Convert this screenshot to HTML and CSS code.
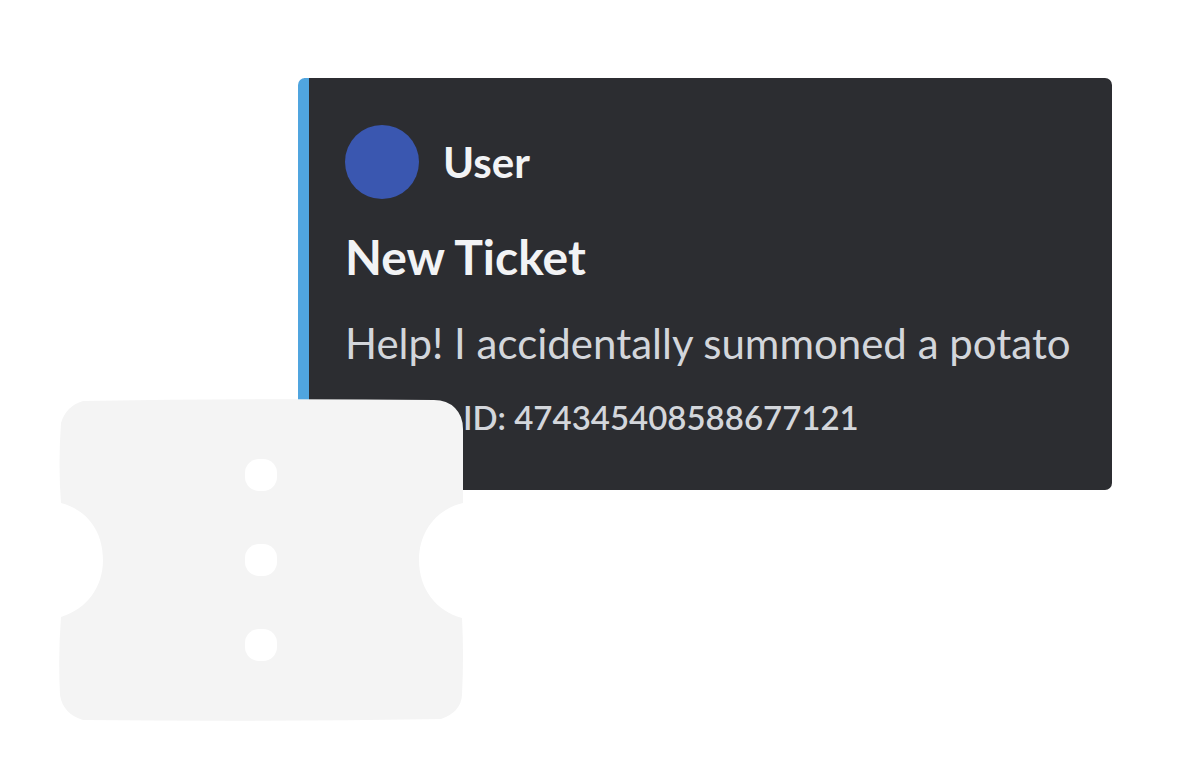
FILE: index.html
```html
<!DOCTYPE html>
<html lang="en">
<head>
    <meta charset="UTF-8">
    <meta name="viewport" content="width=device-width, initial-scale=1.0">
    <title>New Ticket</title>
    <link rel="stylesheet" href="styles.css">
</head>
<body>

<main class="scene">
    <article class="embed">
        <header class="author">
            <span class="avatar"></span>
            <span class="name">User</span>
        </header>
        <h1 class="title">New Ticket</h1>
        <p class="message">Help! I accidentally summoned a potato</p>
        <footer class="footer">ID: 474345408588677121</footer>
    </article>

    <svg class="ticket" viewBox="0 0 404 322" aria-hidden="true">
        <path fill="#f4f4f4" d="M24 2Q202 -1 375 1Q388 1 396 9Q404 17 404 30Q405 66 404 104C378 110 360 132 360 161C360 190 377 212 403 219Q405 256 403 296Q402 313 382 320Q202 323 24 321Q4 315 1 296Q-1 256 2 218C28 210 44 188 44 161C44 132 28 111 2 104Q-1 66 2 24Q7 7 24 2Z"/>
        <g fill="#fff">
            <rect x="186" y="60" width="32" height="32" rx="14"/>
            <rect x="186" y="145" width="32" height="32" rx="14"/>
            <rect x="186" y="230" width="32" height="32" rx="14"/>
        </g>
    </svg>
</main>

</body>
</html>
```

FILE: styles.css
```css
body {
    margin: 0;
    background-color: #fff;
    font-family: Lato, "Noto Sans", sans-serif;
}

.scene {
    padding: 78px 88px 59px 59px;
}

.embed {
    margin-left: 239px;
    padding: 47px 36px 51px;
    border-left: 11px solid #50a5df;
    border-radius: 7px;
    background-color: #2c2d31;
    color: #d3d6db;
    white-space: nowrap;
}

.author {
    display: flex;
    align-items: center;
    gap: 24px;
}

.avatar {
    width: 74px;
    height: 74px;
    border-radius: 50%;
    background-color: #3a57b0;
}

.name {
    color: #f2f3f5;
    font-size: 42px;
    font-weight: bold;
}

.title {
    margin: 30px 0 0;
    color: #f2f3f5;
    font-size: 48px;
    line-height: 56px;
}

.message {
    margin: 32px 0 0;
    font-size: 42px;
    line-height: 52px;
}

.footer {
    margin-top: 26px;
    padding-left: 118px;
    font-size: 33px;
    font-weight: 600;
    line-height: 44px;
}

/* pulled up over the corner of the embed */
.ticket {
    display: block;
    position: relative;
    width: 404px;
    height: 322px;
    margin-top: -91px;
}
```
